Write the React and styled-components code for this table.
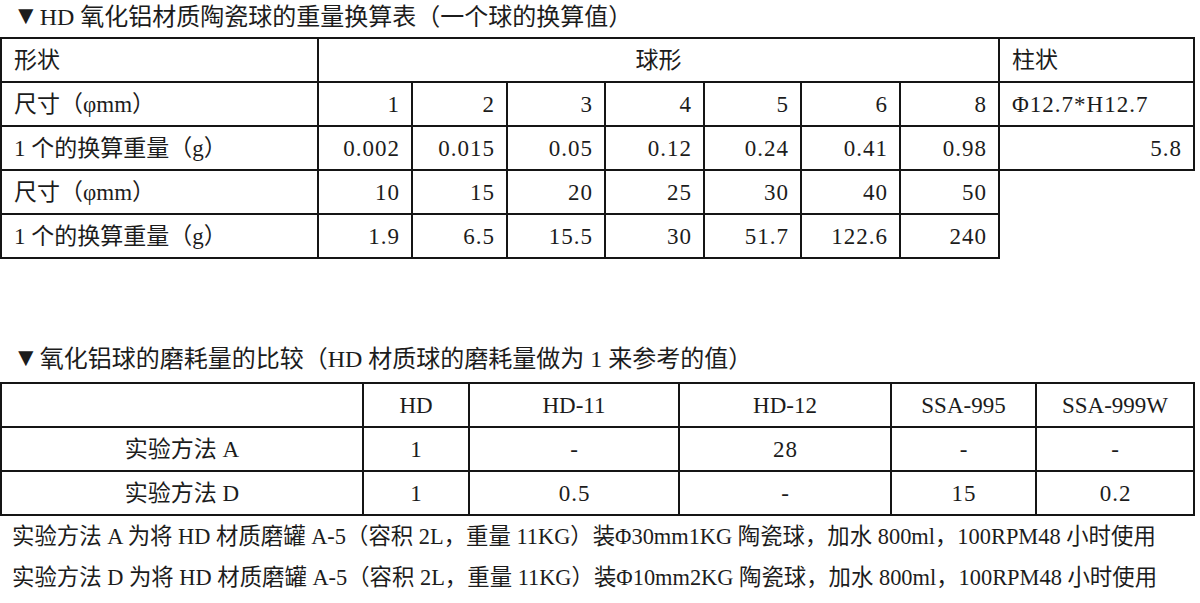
import React from "react";
import styled, {createGlobalStyle} from "styled-components";

const GlobalStyle = createGlobalStyle`
    html, body {
        margin: 0;
        padding: 0;
        background: #fff;
    }
    body {
        font-family: "Liberation Serif", "Noto Sans CJK SC", serif;
        color: #1c1c1c;
    }
`;

const Page = styled.div`
    width: 1200px;
    display: flex;
    flex-direction: column;
`;

const Title = styled.div`
    height: 37px;
    display: flex;
    align-items: flex-end;
    box-sizing: border-box;
    padding: 0 0 ${props => props.$below}px 13px;
    margin-top: ${props => props.$above || 0}px;
    font-size: 24px;
    line-height: 1;
    white-space: nowrap;
`;

const Marker = styled.span`
    font-size: 1.08em;
    margin-right: 1px;
`;

const Sheet = styled.table`
    width: ${props => props.$width}px;
    border-collapse: collapse;
    table-layout: fixed;
    font-size: 23px;
`;

const Row = styled.tr`
    height: 44px;
`;

const Cell = styled.td`
    border: 2px solid #151515;
    padding: 0 ${props => (props.$num ? 11 : 12)}px 0 12px;
    text-align: ${props => props.$align || "right"};
    letter-spacing: ${props => (props.$num ? "1px" : "0")};
    vertical-align: middle;
    white-space: nowrap;
    line-height: 1;
`;

const Notes = styled.div`
    padding: 0 0 0 12px;
    font-size: 22.4px;
    line-height: 41px;
    white-space: nowrap;
`;

const ballSizes = [
    {label: "尺寸（φmm）", values: ["1", "2", "3", "4", "5", "6", "8"], rod: "Φ12.7*H12.7"},
    {label: "1 个的换算重量（g）", values: ["0.002", "0.015", "0.05", "0.12", "0.24", "0.41", "0.98"], rod: "5.8"},
    {label: "尺寸（φmm）", values: ["10", "15", "20", "25", "30", "40", "50"]},
    {label: "1 个的换算重量（g）", values: ["1.9", "6.5", "15.5", "30", "51.7", "122.6", "240"]},
];

const weightCols = [317, 94, 95, 98, 99, 97, 99, 99, 195];

const wearHead = ["HD", "HD-11", "HD-12", "SSA-995", "SSA-999W"];
const wearRows = [
    {label: "实验方法 A", values: ["1", "-", "28", "-", "-"]},
    {label: "实验方法 D", values: ["1", "0.5", "-", "15", "0.2"]},
];
const wearCols = [362, 106, 210, 212, 145, 158];

const sum = list => list.reduce((a, b) => a + b, 0);

const WeightTable = () => (
    <Sheet $width={sum(weightCols)}>
        <colgroup>
            {weightCols.map((w, i) => (
                <col key={i} style={{width: w}} />
            ))}
        </colgroup>
        <tbody>
            <Row>
                <Cell $align="left">形状</Cell>
                <Cell $align="center" colSpan={7}>
                    球形
                </Cell>
                <Cell $align="left">柱状</Cell>
            </Row>
            {ballSizes.map((row, r) => (
                <Row key={r}>
                    <Cell $align="left">{row.label}</Cell>
                    {row.values.map((v, i) => (
                        <Cell key={i} $num>
                            {v}
                        </Cell>
                    ))}
                    {row.rod && (
                        <Cell $align={r === 0 ? "left" : "right"} $num>
                            {row.rod}
                        </Cell>
                    )}
                </Row>
            ))}
        </tbody>
    </Sheet>
);

const WearTable = () => (
    <Sheet $width={sum(wearCols)}>
        <colgroup>
            {wearCols.map((w, i) => (
                <col key={i} style={{width: w}} />
            ))}
        </colgroup>
        <tbody>
            <Row>
                <Cell $align="center" />
                {wearHead.map(h => (
                    <Cell key={h} $align="center">
                        {h}
                    </Cell>
                ))}
            </Row>
            {wearRows.map(row => (
                <Row key={row.label}>
                    <Cell $align="center">{row.label}</Cell>
                    {row.values.map((v, i) => (
                        <Cell key={i} $align="center" $num>
                            {v}
                        </Cell>
                    ))}
                </Row>
            ))}
        </tbody>
    </Sheet>
);

export default function App() {
    return (
        <Page>
            <GlobalStyle />
            <Title $below={8}>
                <Marker>▼</Marker>HD 氧化铝材质陶瓷球的重量换算表（一个球的换算值）
            </Title>
            <WeightTable />
            <Title $above={86} $below={11}>
                <Marker>▼</Marker>氧化铝球的磨耗量的比较（HD 材质球的磨耗量做为 1 来参考的值）
            </Title>
            <WearTable />
            <Notes>
                <div>实验方法 A 为将 HD 材质磨罐 A-5（容积 2L，重量 11KG）装Φ30mm1KG 陶瓷球，加水 800ml，100RPM48 小时使用</div>
                <div>实验方法 D 为将 HD 材质磨罐 A-5（容积 2L，重量 11KG）装Φ10mm2KG 陶瓷球，加水 800ml，100RPM48 小时使用</div>
            </Notes>
        </Page>
    );
}
